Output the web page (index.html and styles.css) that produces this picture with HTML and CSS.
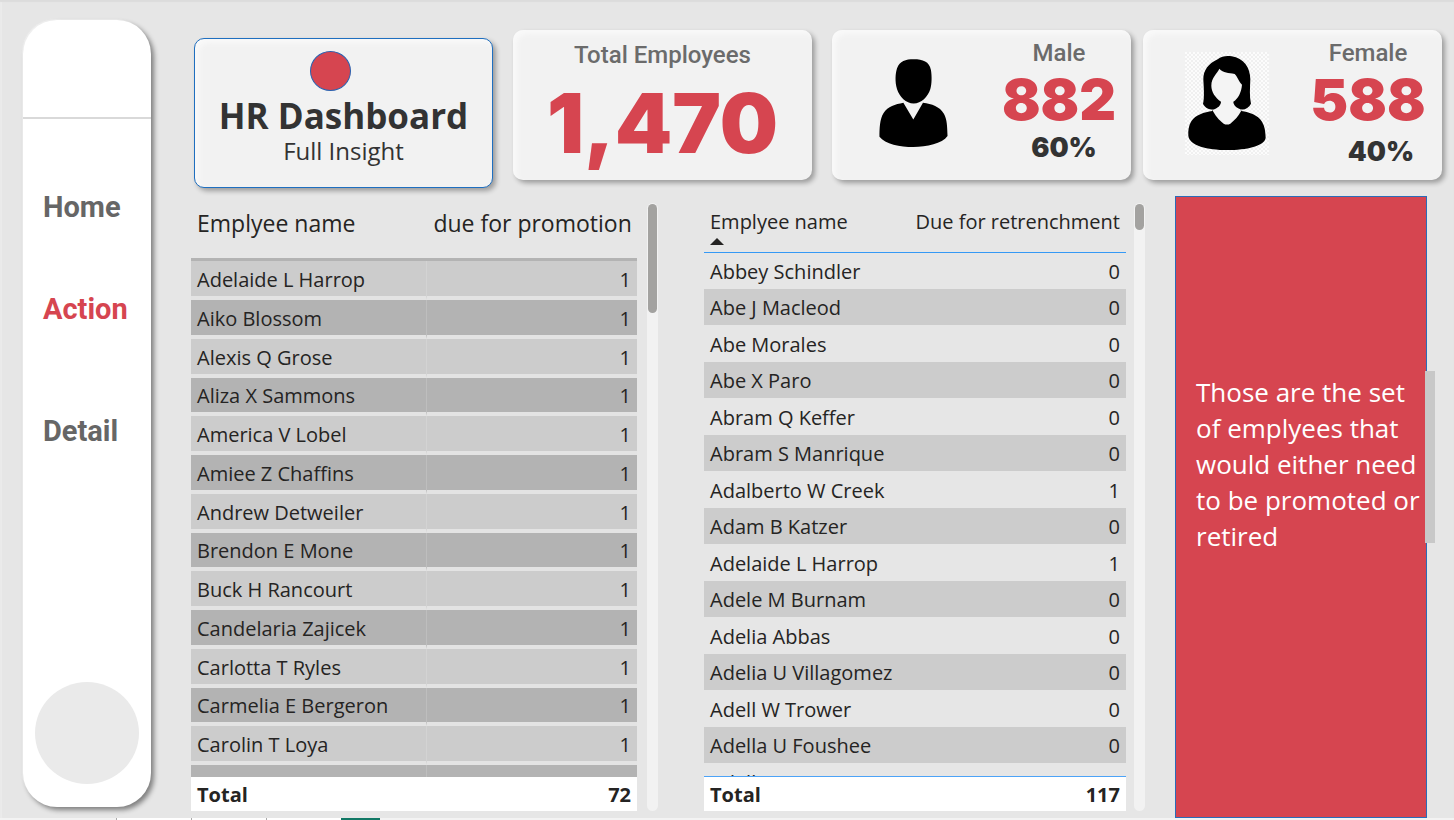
FILE: index.html
```html
<!DOCTYPE html>
<html lang="en">
<head>
<meta charset="utf-8">
<title>HR Dashboard</title>
<link rel="stylesheet" href="styles.css">
</head>
<body>
<div class="stage">
  <aside class="sidebar">
    <div class="sidebar-head"></div>
    <nav class="nav">
      <a class="nav-link" href="#home">Home</a>
      <a class="nav-link active" href="#action">Action</a>
      <a class="nav-link detail" href="#detail">Detail</a>
    </nav>
    <div class="avatar"></div>
  </aside>
  <main class="main">
    <section class="cards">
      <header class="card title-card">
        <span class="dot"></span>
        <h1>HR Dashboard</h1>
        <p>Full Insight</p>
      </header>
      <article class="card total-card">
        <h2>Total Employees</h2>
        <p class="total">1,470</p>
      </article>
      <div class="people">
        <article class="card person-card male">
          <svg class="man" viewBox="0 0 207 265" aria-hidden="true"><path d="M104 1C132 1 151 8 156 33C159 51 159 76 154 91C147 113 127 134 104 134C81 134 61 113 54 91C47 69 49 42 54 28C62 6 80 1 104 1Z"/><path d="M73 132L103 182L132 132C159 136 182 143 195 165C205 182 205 206 206 232C190 255 143 265 103 265C63 265 18 256 1 234C1 207 2 181 13 163C27 143 48 137 73 132Z"/></svg>
          <div class="figures">
            <h2>Male</h2>
            <p class="count">882</p>
            <p class="share">60%</p>
          </div>
        </article>
        <article class="card person-card female">
          <svg class="woman" viewBox="0 0 252 309" aria-hidden="true">
            <defs><pattern id="check" width="12" height="12" patternUnits="userSpaceOnUse"><rect width="12" height="12" fill="#f0f0f0"/><rect width="6" height="6" fill="#fcfcfc"/><rect x="6" y="6" width="6" height="6" fill="#fcfcfc"/></pattern></defs>
            <rect width="252" height="309" fill="url(#check)"/>
            <path d="M98 22C110 12 125 11 140 13C176 18 196 47 196 82C195 108 193 134 198 155C191 168 178 175 168 172L169 177C194 181 218 189 231 209C240 223 241 239 242 257C239 282 185 294 126 294C68 294 13 281 10 251C9 236 11 221 19 208C32 188 57 181 82 177L83 172C72 175 61 167 54 156C59 136 56 103 55 82C55 54 71 34 98 22Z"/>
            <path fill="#f4f4f4" d="M103 50C97 64 79 76 79 101C79 120 91 137 108 149C108 160 98 169 83 173L84 178C95 198 108 209 116 215Q126 220 136 215C150 204 160 193 168 178L167 172C154 168 145 158 145 149C160 139 169 121 171 98C162 90 157 73 149 66C130 61 115 64 103 50Z"/>
          </svg>
          <div class="figures">
            <h2>Female</h2>
            <p class="count">588</p>
            <p class="share">40%</p>
          </div>
        </article>
      </div>
    </section>
    <section class="content">
      <div class="list promotion">
        <div class="viewport">
          <table>
            <thead><tr><th>Emplyee name</th><th>due for promotion</th></tr></thead>
            <tbody>
              <tr><td>Adelaide L Harrop</td><td>1</td></tr>
              <tr><td>Aiko Blossom</td><td>1</td></tr>
              <tr><td>Alexis Q Grose</td><td>1</td></tr>
              <tr><td>Aliza X Sammons</td><td>1</td></tr>
              <tr><td>America V Lobel</td><td>1</td></tr>
              <tr><td>Amiee Z Chaffins</td><td>1</td></tr>
              <tr><td>Andrew Detweiler</td><td>1</td></tr>
              <tr><td>Brendon E Mone</td><td>1</td></tr>
              <tr><td>Buck H Rancourt</td><td>1</td></tr>
              <tr><td>Candelaria Zajicek</td><td>1</td></tr>
              <tr><td>Carlotta T Ryles</td><td>1</td></tr>
              <tr><td>Carmelia E Bergeron</td><td>1</td></tr>
              <tr><td>Carolin T Loya</td><td>1</td></tr>
              <tr><td></td><td></td></tr>
            </tbody>
            <tfoot><tr><td>Total</td><td>72</td></tr></tfoot>
          </table>
        </div>
        <div class="track"><div class="thumb"></div></div>
      </div>
      <div class="list retrenchment">
        <div class="viewport">
          <table>
            <thead><tr><th>Emplyee name<svg class="sort" viewBox="0 0 14 7" aria-hidden="true"><path d="M0 7L7 0L14 7Z"/></svg></th><th>Due for retrenchment</th></tr></thead>
            <tbody>
              <tr><td>Abbey Schindler</td><td>0</td></tr>
              <tr><td>Abe J Macleod</td><td>0</td></tr>
              <tr><td>Abe Morales</td><td>0</td></tr>
              <tr><td>Abe X Paro</td><td>0</td></tr>
              <tr><td>Abram Q Keffer</td><td>0</td></tr>
              <tr><td>Abram S Manrique</td><td>0</td></tr>
              <tr><td>Adalberto W Creek</td><td>1</td></tr>
              <tr><td>Adam B Katzer</td><td>0</td></tr>
              <tr><td>Adelaide L Harrop</td><td>1</td></tr>
              <tr><td>Adele M Burnam</td><td>0</td></tr>
              <tr><td>Adelia Abbas</td><td>0</td></tr>
              <tr><td>Adelia U Villagomez</td><td>0</td></tr>
              <tr><td>Adell W Trower</td><td>0</td></tr>
              <tr><td>Adella U Foushee</td><td>0</td></tr>
              <tr><td>Adelle E B</td><td>0</td></tr>
            </tbody>
            <tfoot><tr><td>Total</td><td>117</td></tr></tfoot>
          </table>
        </div>
        <div class="track"><div class="thumb"></div></div>
      </div>
      <aside class="note">
        <p>Those are the set of emplyees that would either need to be promoted or retired</p>
        <div class="note-thumb"></div>
      </aside>
    </section>
  </main>
</div>
<footer class="tabs"><span class="lead"></span><span></span><span></span><span></span><span class="current"></span></footer>
</body>
</html>
```
FILE: styles.css
```css
* { box-sizing: border-box; }
body {
  margin: 0;
  height: 100vh;
  display: flex;
  flex-direction: column;
  background: #e6e6e6;
  color: #252423;
  font-family: "Open Sans", "Noto Sans", sans-serif;
}
h1, h2, p { margin: 0; }

.stage {
  flex: 1;
  min-height: 0;
  display: flex;
  gap: 40px;
  padding-left: 23px;
  box-shadow: inset 0 2px 1px #dcdcdc, inset 2px 0 1px #ececec;
}

/* Sidebar */
.sidebar {
  width: 128px;
  margin: 20px 0 11px;
  border-radius: 34px;
  background: #fff;
  box-shadow: 3px 3px 5px rgba(0, 0, 0, .45), -1px -1px 1px #f2f2f2;
  display: flex;
  flex-direction: column;
}
.sidebar-head { height: 99px; border-bottom: 2px solid #d9d9d9; }
.nav { display: flex; flex-direction: column; padding: 68px 0 0 20px; }
.nav-link {
  font: 700 29px/40px Roboto, sans-serif;
  color: #666;
  text-decoration: none;
  margin-bottom: 62px;
}
.nav-link.active { color: #d64550; margin-bottom: 82px; }
.nav-link.detail { margin-bottom: 0; }
.avatar {
  width: 104px;
  height: 102px;
  margin: auto auto 23px;
  border-radius: 50%;
  background: #eaeaea;
}

.main { flex: 1; min-width: 0; display: flex; flex-direction: column; gap: 8px; padding-top: 30px; }

/* Summary cards */
.cards {
  display: grid;
  grid-template-columns: minmax(0, 299fr) minmax(0, 299fr) minmax(0, 610fr);
  gap: 20px;
  padding: 0 12px 0 3px;
}
.people { display: grid; grid-template-columns: 1fr 1fr; gap: 12px; }
.card {
  height: 150px;
  border-radius: 10px;
  background: #f2f2f2;
  box-shadow: 3px 3px 5px rgba(0, 0, 0, .32), inset 4px 4px 5px #f9f9f9;
}
.card h2 { font: 500 24px/30px Roboto, sans-serif; color: #6b6b6b; text-align: center; }
.title-card {
  margin-top: 8px;
  border: 1px solid #1f6fc0;
  color: #333;
  display: flex;
  flex-direction: column;
  align-items: center;
  padding-top: 12px;
}
.dot {
  width: 41px;
  height: 40px;
  margin-right: 26px;
  border: 1px solid #2b62b0;
  border-radius: 50%;
  background: #d64550;
}
.title-card h1 { font-size: 35px; line-height: 50px; }
.title-card p { font-size: 24px; line-height: 20px; }
.total-card { padding-top: 10px; text-align: center; }
.total { font: 900 82px/108px Inter, sans-serif; color: #d64550; }
.person-card { display: flex; justify-content: space-between; padding: 8px 12px 0 47px; }
.female { padding-left: 42px; padding-right: 14px; }
.man { width: 69px; height: 88px; margin-top: 21px; }
.woman { width: 84px; height: 103px; margin-top: 14px; }
.figures { width: 120px; text-align: center; }
.count { font: 900 57px/64px Inter, sans-serif; color: #d64550; }
.share { font: 900 27px/32px Inter, sans-serif; color: #333; padding-left: 10px; }
.female .share { padding: 4px 0 0 26px; }

/* Lists and note */
.content {
  flex: 1;
  min-height: 0;
  display: grid;
  grid-template-columns: minmax(0, 513fr) minmax(0, 471fr) minmax(0, 252fr);
  grid-template-rows: minmax(0, 1fr);
  padding-right: 27px;
}
.list { display: flex; min-width: 0; padding-bottom: 7px; }
.promotion { gap: 10px; padding-right: 46px; }
.retrenchment { gap: 8px; padding-right: 30px; }
.viewport { flex: 1; min-width: 0; overflow: hidden; }
table { width: 100%; border-collapse: separate; border-spacing: 0; table-layout: fixed; }
th, td { padding: 0 6px; text-align: left; white-space: nowrap; }
th:last-child, td:last-child { text-align: right; }
thead th { position: sticky; top: 0; background: #e6e6e6; font-weight: 400; vertical-align: top; }
tbody td { padding-top: 2px; font-size: 20px; line-height: 32px; }
tfoot td {
  position: sticky;
  bottom: 0;
  height: 34px;
  padding-top: 2px;
  background: #fff;
  font-size: 20px;
  line-height: 32px;
  font-weight: 700;
}
.promotion th { height: 65px; padding-top: 11px; font-size: 23px; line-height: 32px; border-bottom: 3px solid #b3b3b3; }
.promotion th:first-child { width: 53%; }
.promotion tbody td { height: 39px; background: #ccc; border-bottom: 4px solid #e3e3e3; }
.promotion tbody tr:nth-child(4n) td { height: 38px; }
.promotion tbody tr:nth-child(even) td { background: #b3b3b3; }
.promotion td:first-child { border-right: 1px solid rgba(255, 255, 255, .15); }
.retrenchment th { height: 57px; padding-top: 10px; font-size: 20px; line-height: 32px; border-bottom: 1px solid #3599f5; }
.retrenchment th:first-child { width: 49%; }
.retrenchment th:last-child { padding-left: 0; }
.retrenchment tbody td { height: 36px; border-bottom: 1px solid #e6e6e6; }
.retrenchment tbody tr:nth-child(even) td { height: 37px; background: #ccc; }
.retrenchment tfoot td { height: 35px; border-top: 1px solid #4da3f7; }
.sort { display: block; width: 14px; height: 7px; fill: #252423; }
.track { width: 11px; margin-top: 7px; border-radius: 6px; background: #f2f2f2; padding: 1px; }
.thumb { height: 109px; border-radius: 5px; background: #a3a2a0; }
.retrenchment .thumb { height: 26px; }
.note {
  position: relative;
  background: #d64550;
  border: 1px solid #2b6cb8;
  padding: 177px 0 0 20px;
  color: #fff;
  font-size: 26px;
  line-height: 36px;
}
.note-thumb { position: absolute; top: 174px; right: -9px; width: 10px; height: 172px; background: #c8c8c8; }

/* Sheet tabs along the bottom edge */
.tabs { height: 2px; display: flex; background: #f3f3f3; }
.tabs span { width: 75px; background: #fff; border-left: 1px solid #aaa; }
.tabs .lead { width: 116px; background: #f3f3f3; border: 0; }
.tabs .current { width: 39px; background: #117865; border: 0; }
```
